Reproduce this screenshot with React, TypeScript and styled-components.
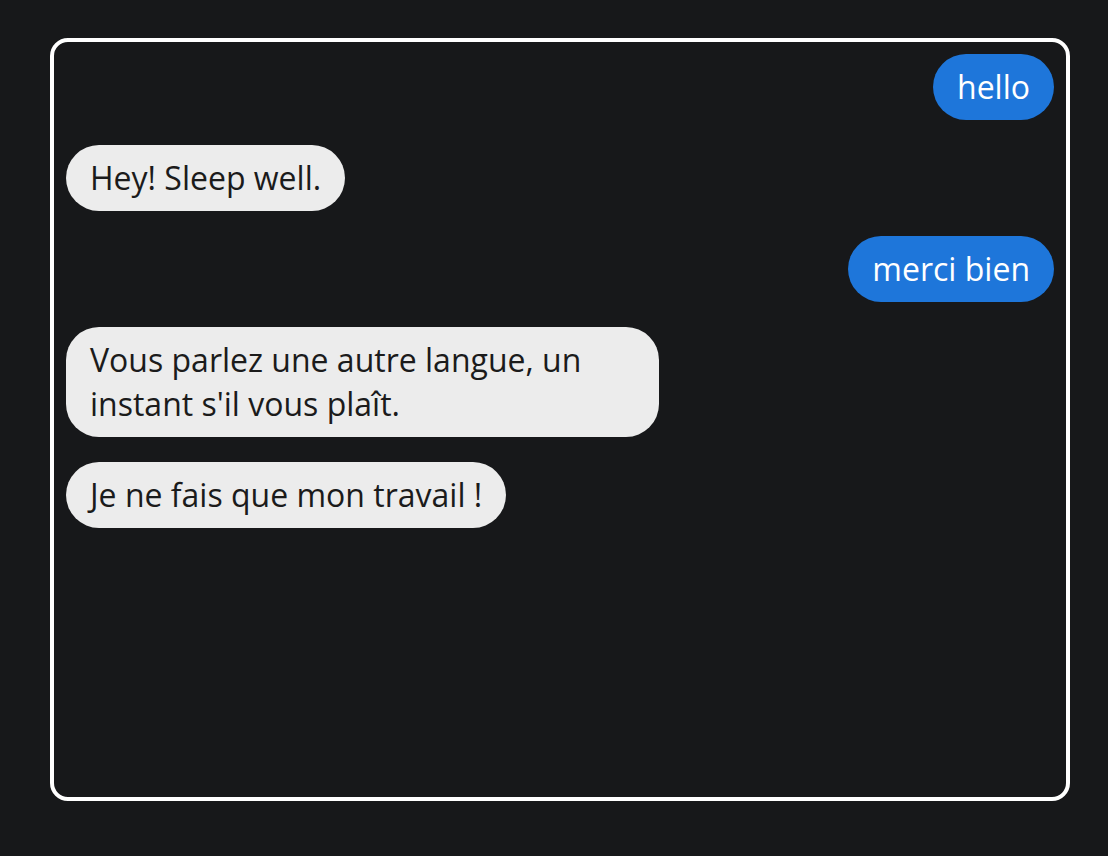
import { createGlobalStyle } from 'styled-components'
import styled from 'styled-components'

const GlobalStyle = createGlobalStyle`
  html, body {
    margin: 0;
    background: #17181a;
  }
  body {
    font-family: 'Open Sans', 'Noto Sans', sans-serif;
  }
`

type Message = {
  text: string
  mine?: boolean
}

const messages: Message[] = [
  { text: 'hello', mine: true },
  { text: 'Hey! Sleep well.' },
  { text: 'merci bien', mine: true },
  { text: "Vous parlez une autre langue, un instant s'il vous plaît." },
  { text: 'Je ne fais que mon travail !' }
]

const App = () => {
  return (
    <Page>
      <GlobalStyle />
      <ChatBox>
        {messages.map((m, i) => (
          <Row key={i} mine={m.mine}>
            <Bubble mine={m.mine}>{m.text}</Bubble>
          </Row>
        ))}
      </ChatBox>
    </Page>
  )
}

const Page = styled.div`
  min-height: 856px;
  padding: 38px 0 0 50px;
  box-sizing: border-box;
`

const ChatBox = styled.div`
  width: 1020px;
  height: 763px;
  box-sizing: border-box;
  border: 4px solid #ffffff;
  border-radius: 18px;
  padding: 12px;
  display: flex;
  flex-direction: column;
  gap: 25px;
`

const Row = styled.div<{ mine?: boolean }>`
  display: flex;
  justify-content: ${({ mine }) => (mine ? 'flex-end' : 'flex-start')};
`

const Bubble = styled.div<{ mine?: boolean }>`
  box-sizing: border-box;
  max-width: 60%;
  padding: 11px 24px;
  border-radius: 33px;
  font-size: 32px;
  line-height: 44px;
  color: ${({ mine }) => (mine ? '#ffffff' : '#1b1b1b')};
  background: ${({ mine }) => (mine ? '#1e76da' : '#ececec')};
`

export default App
